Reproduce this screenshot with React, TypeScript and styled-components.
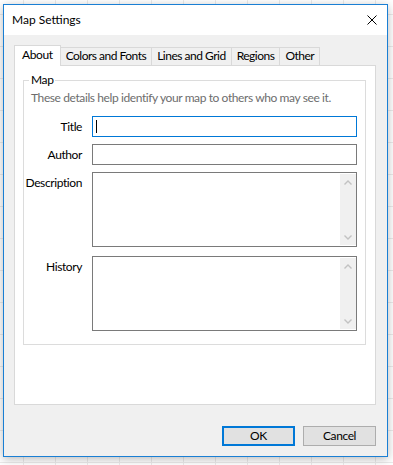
import styled, { createGlobalStyle } from "styled-components";

const GlobalStyle = createGlobalStyle`
    html, body {
        margin: 0;
        padding: 0;
    }
    body {
        font-family: Lato, "Liberation Sans", sans-serif;
        font-size: 12px;
        letter-spacing: -0.4px;
        color: #000;
        background-color: #fff;
        background-image:
            linear-gradient(to right, #ebebeb 1px, transparent 1px),
            linear-gradient(to bottom, #ebebeb 1px, transparent 1px);
        background-size: 32px 32px;
        background-position: 23px 14px;
    }
`

const Desktop = styled.div`
    min-height: 465px;
    padding: 4px 0 0 3px;
    box-sizing: border-box;
`

const Window = styled.div`
    width: 385px;
    height: 453px;
    box-sizing: border-box;
    border: 1px solid #1a7fd4;
    box-shadow: 0 2px 9px rgba(0, 0, 0, 0.28);
    display: flex;
    flex-direction: column;
    background: #f0f0f0;
`

const TitleBar = styled.div`
    height: 30px;
    flex-shrink: 0;
    background: #fff;
    display: flex;
    align-items: center;
    justify-content: space-between;
    padding: 0 10px 0 8px;
    h1 {
        margin: 0;
        font-size: 12px;
        font-weight: normal;
        line-height: 16px;
        letter-spacing: 0;
    }
    svg {
        width: 10px;
        height: 10px;
        display: block;
    }
`

const Body = styled.div`
    flex: 1;
    display: flex;
    flex-direction: column;
    padding: 10px 11px 10px 10px;
`

const TabStrip = styled.div`
    display: flex;
    align-items: flex-end;
    height: 20px;
    position: relative;
    z-index: 1;
`

const Tab = styled.div<{ $active?: boolean }>`
    box-sizing: border-box;
    height: ${(p) => (p.$active ? "21px" : "18px")};
    margin-bottom: ${(p) => (p.$active ? "-1px" : "0")};
    margin-left: ${(p) => (p.$active ? "0" : "-1px")};
    padding: ${(p) => (p.$active ? "1px 7px 0" : "0 5px")};
    border: 1px solid #d9d9d9;
    border-bottom: none;
    background: ${(p) => (p.$active ? "#fff" : "#f0f0f0")};
    line-height: 16px;
    letter-spacing: ${(p) => (p.$active ? "-0.4px" : "-0.5px")};
    white-space: nowrap;
    &:first-child {
        margin-left: 0;
    }
`

const Panel = styled.div`
    height: 340px;
    box-sizing: border-box;
    background: #fff;
    border: 1px solid #d9d9d9;
    padding: 6px 9px 0 8px;
`

const GroupBox = styled.fieldset`
    margin: 0;
    min-width: 0;
    border: 1px solid #dcdcdc;
    padding: 0 8px 13px 1px;
    legend {
        padding: 0 2px;
        margin-left: 4px;
        line-height: 16px;
    }
`

const Hint = styled.p`
    margin: 2px 0 10px;
    padding-left: 6px;
    color: #6d6d6d;
    line-height: 16px;
    white-space: nowrap;
`

const FormGrid = styled.div`
    display: grid;
    grid-template-columns: 57px 265px;
    column-gap: 10px;
    row-gap: 7px;
`

const Label = styled.label<{ $spaced?: boolean }>`
    text-align: right;
    line-height: 16px;
    padding-top: 3px;
    margin-top: ${(p) => (p.$spaced ? "2px" : "0")};
`

const TextBox = styled.div<{ $focused?: boolean }>`
    height: 21px;
    box-sizing: border-box;
    border: 1px solid ${(p) => (p.$focused ? "#0078d7" : "#7a7a7a")};
    background: #fff;
    display: flex;
    align-items: center;
    padding-left: 3px;
`

const Caret = styled.span`
    width: 1px;
    height: 13px;
    background: #000;
`

const TextArea = styled.div<{ $spaced?: boolean }>`
    height: 75px;
    box-sizing: border-box;
    border: 1px solid #7a7a7a;
    background: #fff;
    display: flex;
    justify-content: flex-end;
    padding: 1px 0;
    margin-top: ${(p) => (p.$spaced ? "2px" : "0")};
`

const ScrollBar = styled.div`
    width: 16px;
    background: #f0f0f0;
    display: flex;
    flex-direction: column;
    justify-content: space-between;
    align-items: center;
    padding: 6px 0 5px;
    svg {
        width: 8px;
        height: 5px;
        display: block;
    }
`

const ButtonRow = styled.div`
    display: flex;
    justify-content: flex-end;
    gap: 8px;
    margin-top: 21px;
`

const Button = styled.button<{ $default?: boolean }>`
    width: 73px;
    height: 20px;
    box-sizing: border-box;
    margin: 0;
    padding: 0;
    font-family: inherit;
    font-size: 12px;
    letter-spacing: inherit;
    color: #000;
    background: #e1e1e1;
    border: ${(p) => (p.$default ? "2px solid #0078d7" : "1px solid #adadad")};
    line-height: 16px;
`

function Chevron({ up }: { up?: boolean }) {
    return (
        <svg viewBox="0 0 8 5">
            <polyline
                points={up ? "0.5,4.5 4,1 7.5,4.5" : "0.5,0.5 4,4 7.5,0.5"}
                fill="none"
                stroke="#c2c2c2"
                strokeWidth="1.4"
            />
        </svg>
    )
}

function MultiLine({ spaced }: { spaced?: boolean }) {
    return (
        <TextArea $spaced={spaced}>
            <ScrollBar>
                <Chevron up />
                <Chevron />
            </ScrollBar>
        </TextArea>
    )
}

function App() {
    const tabs = ["About", "Colors and Fonts", "Lines and Grid", "Regions", "Other"];
    return (
        <>
            <GlobalStyle />
            <Desktop>
                <Window>
                    <TitleBar>
                        <h1>Map Settings</h1>
                        <svg viewBox="0 0 10 10">
                            <path d="M0.5 0.5 L9.5 9.5 M9.5 0.5 L0.5 9.5" stroke="#000" strokeWidth="1" />
                        </svg>
                    </TitleBar>
                    <Body>
                        <TabStrip>
                            {tabs.map((t, i) => (
                                <Tab key={t} $active={i === 0}>{t}</Tab>
                            ))}
                        </TabStrip>
                        <Panel>
                            <GroupBox>
                                <legend>Map</legend>
                                <Hint>These details help identify your map to others who may see it.</Hint>
                                <FormGrid>
                                    <Label>Title</Label>
                                    <TextBox $focused>
                                        <Caret />
                                    </TextBox>
                                    <Label>Author</Label>
                                    <TextBox />
                                    <Label>Description</Label>
                                    <MultiLine />
                                    <Label $spaced>History</Label>
                                    <MultiLine spaced />
                                </FormGrid>
                            </GroupBox>
                        </Panel>
                        <ButtonRow>
                            <Button $default>OK</Button>
                            <Button>Cancel</Button>
                        </ButtonRow>
                    </Body>
                </Window>
            </Desktop>
        </>
    )
}

export default App;
